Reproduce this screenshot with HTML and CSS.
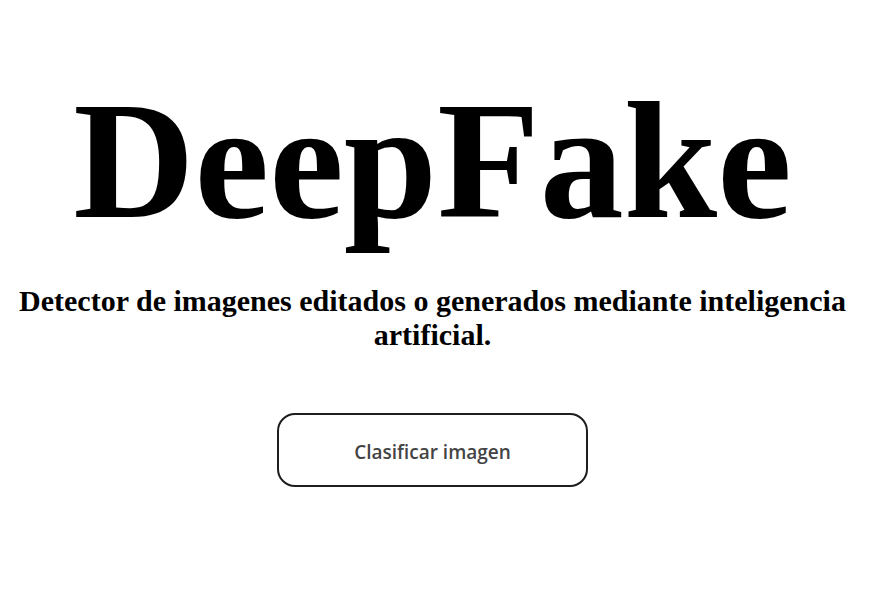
FILE: index.html
```html
<!DOCTYPE html>
<html lang="es">
<head>
<meta charset="utf-8">
<title>DeepFake</title>
<link rel="stylesheet" href="styles.css">
</head>
<body>
<main class="page">
  <h1 class="title">DeepFake</h1>
  <h2 class="subtitle">Detector de imagenes editados o generados mediante inteligencia artificial.</h2>
  <button class="classify" type="button">Clasificar imagen</button>
</main>
</body>
</html>
```

FILE: styles.css
```css
html, body {
  margin: 0;
  padding: 0;
  background: #fff;
}
.page {
  display: flex;
  flex-direction: column;
  align-items: center;
  font-family: "Liberation Serif", "Times New Roman", serif;
  color: #000;
  padding: 8px 12px 0 0;
}
.title {
  margin: 0;
  font-size: 168px;
  font-weight: bold;
  line-height: 170px;
  margin-top: 67px;
}
.subtitle {
  margin: 39px 0 0;
  font-size: 30px;
  font-weight: bold;
  line-height: 34px;
  text-align: center;
}
.classify {
  margin-top: 61px;
  width: 311px;
  height: 74px;
  border: 2px solid #1e1e1e;
  border-radius: 18px;
  background: #fff;
  font-family: "Open Sans", "Noto Sans", sans-serif;
  font-size: 19px;
  font-weight: 600;
  color: #444;
  padding-top: 4px;
  cursor: pointer;
}
```
